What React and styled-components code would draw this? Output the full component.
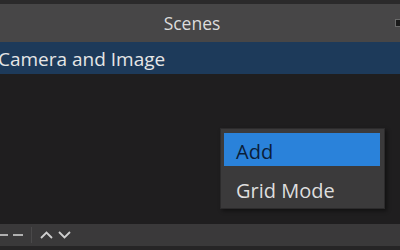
import React from "react";
import styled, { createGlobalStyle } from "styled-components";

const Global = createGlobalStyle`
  html, body { margin: 0; padding: 0; background: #1f1e1f; }
  body { font-family: "Open Sans", "Noto Sans", sans-serif; }
`;

const Screen = styled.div`
  position: relative;
  width: 400px;
  height: 250px;
  overflow: hidden;
  display: flex;
  flex-direction: column;
  background: #1f1e1f;
`;

const TopStrip = styled.div`
  height: 4px;
  background: #2b2a2b;
`;

const Header = styled.div`
  height: 38px;
  background: #474647;
  display: flex;
  align-items: center;
  justify-content: center;
  position: relative;
  color: #dcdcdc;
  font-size: 17.5px;
  padding-right: 16px;
`;

const DockButton = styled.div`
  position: absolute;
  right: -4px;
  top: 15px;
  width: 7px;
  height: 6px;
  background: #1a1a1a;
  border: 1px solid #6a6a6a;
`;

const List = styled.div`
  flex: 1;
  display: flex;
  flex-direction: column;
  background: #1f1e1f;
`;

const Row = styled.div`
  height: 32px;
  box-sizing: border-box;
  padding-top: 2px;
  display: flex;
  align-items: center;
  margin-left: -2px;
  background: ${(p) => (p.$selected ? "#1d3a5a" : "transparent")};
  color: #e6e6e6;
  font-size: 19px;
`;

const Toolbar = styled.div`
  height: 22px;
  background: #3a393a;
  display: flex;
  align-items: center;
  color: #cfcfcf;
`;

const ToolButton = styled.div`
  width: ${(p) => p.$w || 14}px;
  margin-left: ${(p) => p.$ml || 0}px;
  height: 22px;
  display: flex;
  align-items: center;
  justify-content: center;
`;

const Separator = styled.div`
  width: 1px;
  height: 16px;
  background: #4a494a;
  margin: 0 6px 0 8px;
`;

const BottomStrip = styled.div`
  height: 4px;
  background: #262526;
`;

const Menu = styled.div`
  position: absolute;
  left: 220px;
  top: 128px;
  width: 165px;
  height: 81px;
  box-sizing: border-box;
  background: #3b3a3b;
  border: 1px solid #2c2b2c;
  box-shadow: 2px 2px 4px rgba(0, 0, 0, 0.45);
  padding: 4px 4px 0 3px;
  display: flex;
  flex-direction: column;
  gap: 6px;
`;

const MenuItem = styled.div`
  height: 33px;
  box-sizing: border-box;
  padding-top: 3px;
  display: flex;
  align-items: center;
  padding-left: 12px;
  font-size: 20px;
  background: ${(p) => (p.$active ? "#2a82da" : "transparent")};
  color: ${(p) => (p.$active ? "#0a1e3a" : "#dedede")};
`;

const Minus = ({ w = 10 }) => (
  <svg width={w} height="10" viewBox={`0 0 ${w} 10`}>
    <path d={`M0 5 H${w}`} stroke="#cfcfcf" strokeWidth="1.6" />
  </svg>
);

const Chevron = ({ up }) => (
  <svg width="13" height="8" viewBox="0 0 13 8">
    <path
      d={up ? "M1 7 L6.5 1.5 L12 7" : "M1 1 L6.5 6.5 L12 1"}
      stroke="#cfcfcf"
      strokeWidth="1.8"
      fill="none"
    />
  </svg>
);

export default function App() {
  return (
    <>
      <Global />
      <Screen>
        <TopStrip />
        <Header>
          Scenes
          <DockButton />
        </Header>
        <List>
          <Row $selected>Camera and Image</Row>
        </List>
        <Toolbar>
          <ToolButton $w={8}><Minus w={8} /></ToolButton>
          <ToolButton $w={10} $ml={5}><Minus w={10} /></ToolButton>
          <Separator />
          <ToolButton $w={13} $ml={2}><Chevron up /></ToolButton>
          <ToolButton $w={13} $ml={5}><Chevron /></ToolButton>
        </Toolbar>
        <BottomStrip />
        <Menu>
          <MenuItem $active>Add</MenuItem>
          <MenuItem>Grid Mode</MenuItem>
        </Menu>
      </Screen>
    </>
  );
}
